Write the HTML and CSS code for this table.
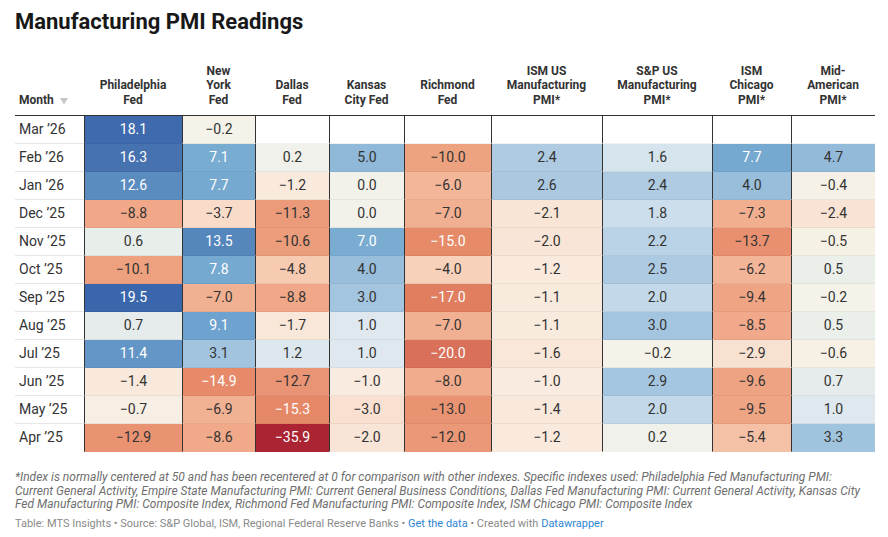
FILE: index.html
```html
<!DOCTYPE html>
<html lang="en">
<head>
<meta charset="utf-8">
<title>Manufacturing PMI Readings</title>
<link rel="stylesheet" href="styles.css">
</head>
<body>
<div class="chart">
  <h1 class="title">Manufacturing PMI Readings</h1>
  <div class="grid" id="grid">
    <div class="th th-month">Month <svg class="sort" width="8" height="7" viewBox="0 0 8 7"><path d="M0 0H8L4 7Z" fill="#c9c9c9"/></svg></div>
    <div class="th">Philadelphia<br>Fed</div>
    <div class="th">New<br>York<br>Fed</div>
    <div class="th">Dallas<br>Fed</div>
    <div class="th">Kansas<br>City Fed</div>
    <div class="th">Richmond<br>Fed</div>
    <div class="th">ISM US<br>Manufacturing<br>PMI*</div>
    <div class="th">S&amp;P US<br>Manufacturing<br>PMI*</div>
    <div class="th">ISM<br>Chicago<br>PMI*</div>
    <div class="th">Mid-<br>American<br>PMI*</div>

    <div class="td month">Mar ’26</div><div class="td num">18.1</div><div class="td num">−0.2</div><div class="td num"></div><div class="td num"></div><div class="td num"></div><div class="td num"></div><div class="td num"></div><div class="td num"></div><div class="td num"></div>
    <div class="td month">Feb ’26</div><div class="td num">16.3</div><div class="td num">7.1</div><div class="td num">0.2</div><div class="td num">5.0</div><div class="td num">−10.0</div><div class="td num">2.4</div><div class="td num">1.6</div><div class="td num">7.7</div><div class="td num">4.7</div>
    <div class="td month">Jan ’26</div><div class="td num">12.6</div><div class="td num">7.7</div><div class="td num">−1.2</div><div class="td num">0.0</div><div class="td num">−6.0</div><div class="td num">2.6</div><div class="td num">2.4</div><div class="td num">4.0</div><div class="td num">−0.4</div>
    <div class="td month">Dec ’25</div><div class="td num">−8.8</div><div class="td num">−3.7</div><div class="td num">−11.3</div><div class="td num">0.0</div><div class="td num">−7.0</div><div class="td num">−2.1</div><div class="td num">1.8</div><div class="td num">−7.3</div><div class="td num">−2.4</div>
    <div class="td month">Nov ’25</div><div class="td num">0.6</div><div class="td num">13.5</div><div class="td num">−10.6</div><div class="td num">7.0</div><div class="td num">−15.0</div><div class="td num">−2.0</div><div class="td num">2.2</div><div class="td num">−13.7</div><div class="td num">−0.5</div>
    <div class="td month">Oct ’25</div><div class="td num">−10.1</div><div class="td num">7.8</div><div class="td num">−4.8</div><div class="td num">4.0</div><div class="td num">−4.0</div><div class="td num">−1.2</div><div class="td num">2.5</div><div class="td num">−6.2</div><div class="td num">0.5</div>
    <div class="td month">Sep ’25</div><div class="td num">19.5</div><div class="td num">−7.0</div><div class="td num">−8.8</div><div class="td num">3.0</div><div class="td num">−17.0</div><div class="td num">−1.1</div><div class="td num">2.0</div><div class="td num">−9.4</div><div class="td num">−0.2</div>
    <div class="td month">Aug ’25</div><div class="td num">0.7</div><div class="td num">9.1</div><div class="td num">−1.7</div><div class="td num">1.0</div><div class="td num">−7.0</div><div class="td num">−1.1</div><div class="td num">3.0</div><div class="td num">−8.5</div><div class="td num">0.5</div>
    <div class="td month">Jul ’25</div><div class="td num">11.4</div><div class="td num">3.1</div><div class="td num">1.2</div><div class="td num">1.0</div><div class="td num">−20.0</div><div class="td num">−1.6</div><div class="td num">−0.2</div><div class="td num">−2.9</div><div class="td num">−0.6</div>
    <div class="td month">Jun ’25</div><div class="td num">−1.4</div><div class="td num">−14.9</div><div class="td num">−12.7</div><div class="td num">−1.0</div><div class="td num">−8.0</div><div class="td num">−1.0</div><div class="td num">2.9</div><div class="td num">−9.6</div><div class="td num">0.7</div>
    <div class="td month">May ’25</div><div class="td num">−0.7</div><div class="td num">−6.9</div><div class="td num">−15.3</div><div class="td num">−3.0</div><div class="td num">−13.0</div><div class="td num">−1.4</div><div class="td num">2.0</div><div class="td num">−9.5</div><div class="td num">1.0</div>
    <div class="td month last">Apr ’25</div><div class="td num last">−12.9</div><div class="td num last">−8.6</div><div class="td num last">−35.9</div><div class="td num last">−2.0</div><div class="td num last">−12.0</div><div class="td num last">−1.2</div><div class="td num last">0.2</div><div class="td num last">−5.4</div><div class="td num last">3.3</div>
  </div>
  <p class="notes">*Index is normally centered at 50 and has been recentered at 0 for comparison with other indexes. Specific indexes used: Philadelphia Fed Manufacturing PMI: Current General Activity, Empire State Manufacturing PMI: Current General Business Conditions, Dallas Fed Manufacturing PMI: Current General Activity, Kansas City Fed Manufacturing PMI: Composite Index, Richmond Fed Manufacturing PMI: Composite Index, ISM Chicago PMI: Composite Index</p>
  <p class="source">Table: MTS Insights • Source: S&amp;P Global, ISM, Regional Federal Reserve Banks • <a class="link" href="#">Get the data</a> • Created with <a class="link" href="#">Datawrapper</a></p>
</div>
<script src="script.js"></script>
</body>
</html>
```

FILE: styles.css
```css
* { box-sizing: border-box; }
html, body { margin: 0; padding: 0; background: #fff; }
body {
  font-family: Roboto, "Liberation Sans", Arial, sans-serif;
  color: #333;
}
.chart {
  padding: 9px 15px 0 15px;
  width: 888px;
}
.title {
  margin: 0 0 29px 0;
  font-size: 22px;
  line-height: 26px;
  font-weight: 700;
  color: #181818;
}
.grid {
  display: grid;
  grid-template-columns: 69px 98px 73px 74px 75px 87px 111px 110px 79px 84px;
  width: 860px;
}
.th {
  display: flex;
  align-items: flex-end;
  justify-content: center;
  text-align: center;
  font-size: 12px;
  line-height: 14.4px;
  font-weight: 700;
  color: #333;
  padding: 0 2px 8px 2px;
  border-bottom: 1px solid #333;
}
.th-month {
  justify-content: flex-start;
  align-items: flex-end;
  padding-left: 4px;
  gap: 6px;
}
.sort { margin-bottom: 2px; }
.td {
  height: 28px;
  line-height: 27px;
  font-size: 14px;
  color: #333;
  border-bottom: 1px solid rgba(0, 0, 0, 0.05);
}
.month {
  padding-left: 4px;
  border-bottom-color: #e6e6e6;
  white-space: nowrap;
}
.num {
  text-align: center;
  border-left: 1px solid #333;
}
.td.last { border-bottom-color: transparent; }
.td.light { color: #fff; }
.notes {
  margin: 19px 0 0 0;
  font-size: 12px;
  line-height: 13.6px;
  font-style: italic;
  color: #6e6e6e;
  width: 858px;
}
.source {
  margin: 5px 0 0 0;
  font-size: 11px;
  line-height: 14px;
  color: #8a8a8a;
}
.link { color: #2f86d3; text-decoration: none; }
```

FILE: script.js
```js
(function () {
  var stops = [
    [-35.9, '#ab2433'], [-20, '#d9705a'], [-17, '#e07e5f'], [-15, '#e68a68'],
    [-13, '#e99373'], [-11, '#eb9c7a'], [-10, '#eda280'], [-8.8, '#f0a888'],
    [-7, '#f1b092'], [-6, '#f3b699'], [-4.8, '#f6cbb2'], [-4, '#f7d1b9'],
    [-3.7, '#f9dbca'], [-3, '#f9e0d0'], [-2, '#f9e5d7'], [-1, '#f9ebdf'],
    [-0.5, '#f6f1e5'], [0, '#f2f2eb'], [0.5, '#eaefe9'], [1, '#dfe8ee'],
    [1.6, '#d5e4ed'], [2, '#c3d8e8'], [2.4, '#aecbe2'], [3, '#a3c5df'],
    [4, '#99bedb'], [5, '#90b8d8'], [7, '#7aacd1'], [9.1, '#6fa3cf'],
    [11.4, '#6396c6'], [12.6, '#5a8cc0'], [16.3, '#4672b0'], [19.5, '#3a66ac']
  ];
  function hex(c) {
    return [parseInt(c.substr(1, 2), 16), parseInt(c.substr(3, 2), 16), parseInt(c.substr(5, 2), 16)];
  }
  function color(v) {
    if (v <= stops[0][0]) return stops[0][1];
    for (var i = 1; i < stops.length; i++) {
      if (v <= stops[i][0]) {
        var a = stops[i - 1], b = stops[i];
        var t = (v - a[0]) / (b[0] - a[0]);
        var ca = hex(a[1]), cb = hex(b[1]);
        var r = ca.map(function (x, k) { return Math.round(x + (cb[k] - x) * t); });
        return 'rgb(' + r.join(',') + ')';
      }
    }
    return stops[stops.length - 1][1];
  }
  var cells = document.querySelectorAll('.td.num');
  cells.forEach(function (el) {
    var s = el.textContent.trim();
    if (!s) return;
    var v = parseFloat(s.replace('\u2212', '-'));
    el.style.background = color(v);
    if (v > 6 || v < -14) el.classList.add('light');
  });
})();
```
